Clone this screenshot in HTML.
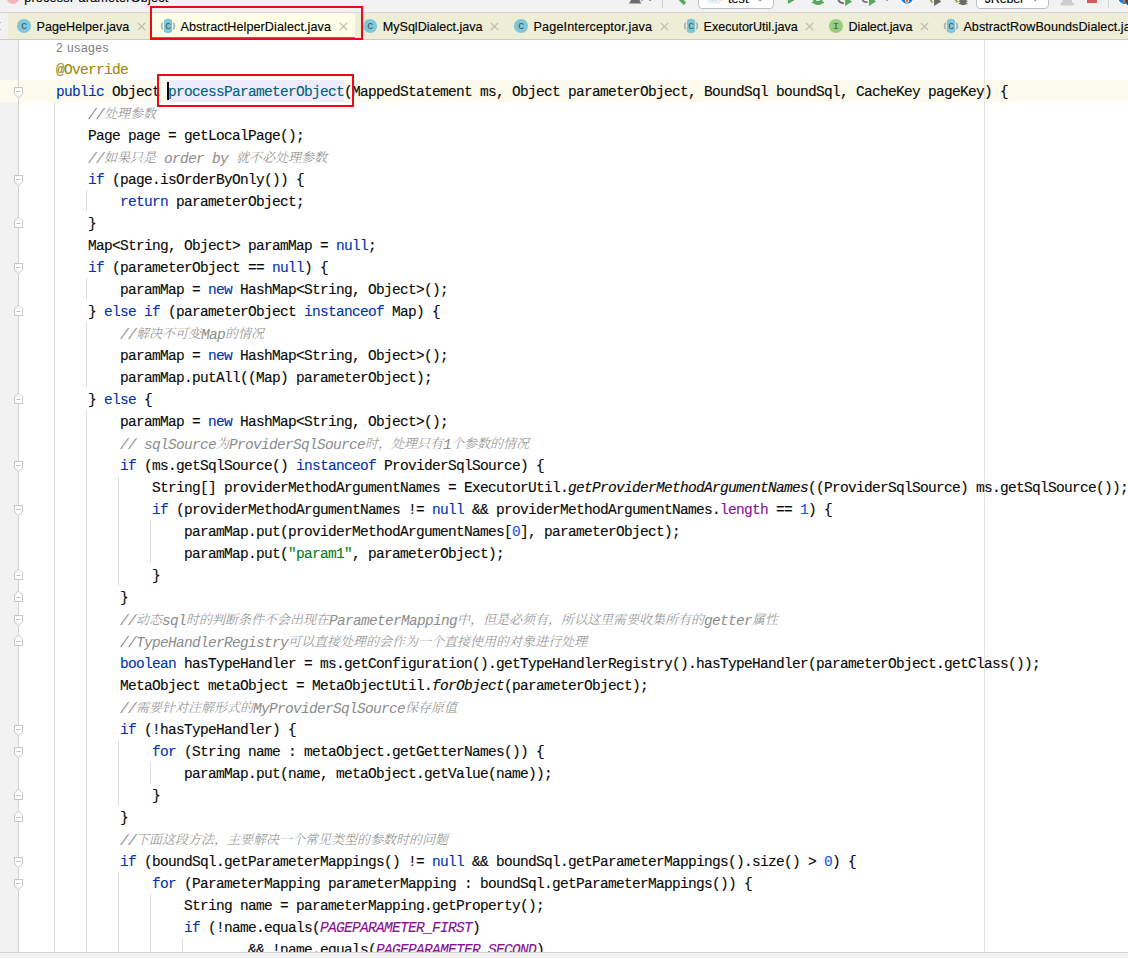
<!DOCTYPE html>
<html lang="zh">
<head>
<meta charset="utf-8">
<title>AbstractHelperDialect.java</title>
<style>
html,body{margin:0;padding:0}
body{width:1128px;height:958px;overflow:hidden;position:relative;background:#fff;font-family:"Liberation Sans","Noto Sans CJK SC",sans-serif}
#top{position:absolute;left:0;top:0;width:1128px;height:12px;background:#f2f2f2;border-bottom:1px solid #d4d4d4;overflow:hidden}
#tabs{position:absolute;left:0;top:13px;width:1128px;height:26px;background:#f2f2f2;border-bottom:1px solid #cbcbcb;overflow:hidden}
#tabs .bg{position:absolute;left:8px;top:0;width:1120px;height:26px;background:#eeedd5}
#tabs .act{position:absolute;left:152px;top:0;width:203px;height:27px;background:#fffee6}
#tabs .act i{position:absolute;left:0;top:24px;width:100%;height:3px;background:#3f84cc}
#tw{position:absolute;left:0;top:0;width:1128px;height:40px;overflow:hidden}
.ic{position:absolute;display:block}
.tl{position:absolute;top:19px;height:16px;line-height:16px;font-size:12.6px;color:#000;-webkit-text-stroke:0.12px #000;white-space:nowrap;font-family:"Liberation Sans",sans-serif;transform-origin:0 50%}
#ed{position:absolute;left:0;top:40px;width:1128px;height:912px;overflow:hidden;background:#fff}
#gut{position:absolute;left:0;top:0;width:18px;height:913px;background:#f2f2f2;border-right:1px solid #d3d3d3}
#code{position:absolute;left:0;top:-40px;width:1128px;height:991px}
#crow{position:absolute;left:0;top:80px;width:1128px;height:22px;background:#fcfaed}
#gline{position:absolute;left:18px;top:0;width:1px;height:991px;background:#d3d3d3}
#rm{position:absolute;left:984px;top:0;width:1px;height:991px;background:#e2e2e2}
#hl{position:absolute;left:168px;top:80px;width:176px;height:22px;background:#edebfc}
#caret{position:absolute;left:167px;top:82px;width:2px;height:18px;background:#000}
.ln{position:absolute;height:22px;line-height:22px;white-space:pre;font-family:"Liberation Mono","Noto Serif CJK SC",monospace;font-size:14.5px;letter-spacing:-0.7014px;color:#080808;margin-top:1px;-webkit-text-stroke-width:0.12px}
.hint{position:absolute;height:22px;line-height:22px;white-space:pre;font-family:"Liberation Sans",sans-serif;font-size:12px;letter-spacing:0.55px;color:#7c7c88;margin-top:1px}
.k{color:#0033b3}.n{color:#1750eb}.s{color:#067d17}.a{color:#9e880d}.f{color:#871094}.i{font-style:italic}.m{color:#00627a}
.c{color:#8c8c8c;font-style:italic;-webkit-text-stroke-width:0}
.z{font-family:"Noto Serif CJK SC",serif;font-size:13px;font-weight:300;letter-spacing:0;position:relative;top:-1px;-webkit-text-stroke-width:0}
.g{position:absolute;width:1px;background:#dedede;display:block}
.fm{position:absolute;display:block}
.red{position:absolute;border:2px solid #ec0a14;box-sizing:border-box}
#bot{position:absolute;left:0;top:952px;width:1128px;height:6px;background:#f2f2f2;border-top:1px solid #d0d0d0;box-sizing:border-box}
</style>
</head>
<body>
<div id="top">
<svg width="1128" height="12" viewBox="0 0 1128 12" style="position:absolute;left:0;top:0;display:block" font-family="Liberation Sans, sans-serif">
<circle cx="13" cy="-2.5" r="6.5" fill="#f5b4c2"/>
<text x="24.2" y="2.3" font-size="12.6" fill="#000" stroke="#000" stroke-width="0.12" textLength="144" lengthAdjust="spacing">processParameterObject</text>
<path d="M631 0H639.5L641.2 3.4H629Z" fill="#6e6e6e"/><rect x="641.3" y="0" width="1.2" height="0.8" fill="#6e6e6e"/>
<rect x="649.3" y="0" width="1.6" height="1" fill="#7a7a7a"/>
<rect x="662" y="0" width="1" height="7.5" fill="#cdcdcd"/>
<path d="M678.7 0H683.7L686.2 2.7L683.6 5Z" fill="#55a85f"/>
<rect x="698.5" y="-4.5" width="75" height="13" rx="3.5" ry="3.5" fill="#fff" stroke="#c0c0c0"/>
<rect x="708.5" y="-4.5" width="11" height="7.5" fill="#fff" stroke="#e3e7ea"/><rect x="710" y="-4" width="8" height="5.8" fill="#d4e9f7"/>
<rect x="721" y="0" width="1" height="1" fill="#b0b0b0"/>
<text x="727.9" y="3" font-size="12.6" fill="#000" stroke="#000" stroke-width="0.12" textLength="20.5" lengthAdjust="spacing">test</text>
<rect x="759.2" y="0" width="1.8" height="1" fill="#7a7a7a"/>
<path d="M787.9 0H794.5L787.9 3.9Z" fill="#55a85f"/>
<path d="M813.3 0H822.6V1.2Q822.6 5 818 5Q813.3 5 813.3 1.2Z" fill="#55a85f"/><rect x="811.9" y="1.9" width="12.2" height="1.3" fill="#55a85f"/><rect x="816.3" y="0" width="3.6" height="1" fill="#e8f3e9"/>
<path d="M838.3 0Q839.5 3 843.8 3.4" stroke="#6a6a6a" stroke-width="2" fill="none"/>
<path d="M845.1 0H849.9L852 1.4L845.1 6Z" fill="#55a85f"/>
<path d="M862.3 0Q863.5 2.4 867.6 2.2" stroke="#6a6a6a" stroke-width="1.5" fill="none"/>
<path d="M869 0H874L875.9 1.6L869 5.9Z" fill="#55a85f"/>
<rect x="886.2" y="0" width="1.6" height="0.8" fill="#7a7a7a"/>
<circle cx="907" cy="-2.2" r="7.1" fill="#fff"/><circle cx="907" cy="-2.2" r="6" fill="#217be0"/><rect x="905.3" y="-4" width="3.6" height="6.7" rx="1.6" fill="#fff"/><rect x="906" y="-4" width="2.1" height="6" rx="1" fill="#f26a25"/>
<path d="M929.6 0H931.6L933.2 2.2L931.8 3Z" fill="#7aa82f"/><path d="M934 0H939.4L941.2 1.6L934 5.9Z" fill="#6b6b6b"/>
<path d="M954.6 0H956.6L958.2 2.2L956.8 3Z" fill="#7aa82f"/><path d="M959.6 0H966.6V1.4Q966.6 5.1 963.1 5.1Q959.6 5.1 959.6 1.4Z" fill="#6b6b6b"/><path d="M958.6 1.3H967.6M958.8 3.6H967.4" stroke="#6b6b6b" stroke-width="1.1"/>
<rect x="976.5" y="-4.5" width="72" height="13" rx="3.5" ry="3.5" fill="#fff" stroke="#c0c0c0"/>
<text x="984.8" y="3" font-size="12.6" fill="#000" stroke="#000" stroke-width="0.12" textLength="38" lengthAdjust="spacing">JRebel</text>
<rect x="1034.4" y="0" width="1.8" height="1" fill="#7a7a7a"/>
<path d="M1062.5 0H1071.8V2Q1074 2.3 1074 4Q1074 5.6 1072.5 5.6H1062Q1060.6 5.6 1060.6 4Q1060.6 2.3 1062.5 2Z" fill="#cdcdcd"/>
<rect x="1087" y="-4" width="10" height="7" fill="#db5860"/>
<rect x="1108" y="0" width="1" height="7.5" fill="#cdcdcd"/>
<circle cx="1124.5" cy="-2" r="7.2" fill="#fff"/><circle cx="1124.5" cy="-2" r="6" fill="#217be0"/><rect x="1123.2" y="-3" width="2.2" height="5.4" rx="1" fill="#f26a25"/><circle cx="1131.5" cy="0" r="6.5" fill="#3d4c56"/>
</svg>
</div>
<div id="tabs"><div class="bg"></div><i style="position:absolute;left:0;top:9px;width:1px;height:1px;background:#b4b4b4"></i><i style="position:absolute;left:0;top:16px;width:1px;height:1px;background:#b4b4b4"></i><div class="act"><i></i></div></div>
<div id="ed">
<div id="gut"></div>
<div id="code">
<div id="crow"></div>
<div id="gline"></div>
<div id="rm"></div>
<div id="hl"></div>
<i class="g" style="left:54px;top:102px;height:850px"></i>
<i class="g" style="left:86px;top:190px;height:22px"></i>
<i class="g" style="left:86px;top:278px;height:22px"></i>
<i class="g" style="left:86px;top:322px;height:66px"></i>
<i class="g" style="left:86px;top:410px;height:542px"></i>
<i class="g" style="left:118px;top:476px;height:110px"></i>
<i class="g" style="left:118px;top:740px;height:66px"></i>
<i class="g" style="left:118px;top:872px;height:80px"></i>
<i class="g" style="left:150px;top:520px;height:44px"></i>
<i class="g" style="left:150px;top:762px;height:22px"></i>
<i class="g" style="left:150px;top:894px;height:58px"></i>
<i class="g" style="left:182px;top:938px;height:14px"></i>
<div class="hint" style="top:36px;left:56px">2 usages</div>
<div class="ln" style="top:58px;left:56px"><span class="a">@Override</span></div>
<div class="ln" style="top:80px;left:56px"><span class="k">public</span> Object <span class="m">processParameterObject</span>(MappedStatement ms, Object parameterObject, BoundSql boundSql, CacheKey pageKey) {</div>
<div class="ln" style="top:102px;left:88px"><span class="c">//<span class="z">处理参数</span></span></div>
<div class="ln" style="top:124px;left:88px">Page page = getLocalPage();</div>
<div class="ln" style="top:146px;left:88px"><span class="c">//<span class="z">如果只是</span> order by <span class="z">就不必处理参数</span></span></div>
<div class="ln" style="top:168px;left:88px"><span class="k">if</span> (page.isOrderByOnly()) {</div>
<div class="ln" style="top:190px;left:120px"><span class="k">return</span> parameterObject;</div>
<div class="ln" style="top:212px;left:88px">}</div>
<div class="ln" style="top:234px;left:88px">Map&lt;String, Object&gt; paramMap = <span class="k">null</span>;</div>
<div class="ln" style="top:256px;left:88px"><span class="k">if</span> (parameterObject == <span class="k">null</span>) {</div>
<div class="ln" style="top:278px;left:120px">paramMap = <span class="k">new</span> HashMap&lt;String, Object&gt;();</div>
<div class="ln" style="top:300px;left:88px">} <span class="k">else</span> <span class="k">if</span> (parameterObject <span class="k">instanceof</span> Map) {</div>
<div class="ln" style="top:322px;left:120px"><span class="c">//<span class="z">解决不可变</span>Map<span class="z">的情况</span></span></div>
<div class="ln" style="top:344px;left:120px">paramMap = <span class="k">new</span> HashMap&lt;String, Object&gt;();</div>
<div class="ln" style="top:366px;left:120px">paramMap.putAll((Map) parameterObject);</div>
<div class="ln" style="top:388px;left:88px">} <span class="k">else</span> {</div>
<div class="ln" style="top:410px;left:120px">paramMap = <span class="k">new</span> HashMap&lt;String, Object&gt;();</div>
<div class="ln" style="top:432px;left:120px"><span class="c">// sqlSource<span class="z">为</span>ProviderSqlSource<span class="z">时，处理只有</span>1<span class="z">个参数的情况</span></span></div>
<div class="ln" style="top:454px;left:120px"><span class="k">if</span> (ms.getSqlSource() <span class="k">instanceof</span> ProviderSqlSource) {</div>
<div class="ln" style="top:476px;left:152px">String[] providerMethodArgumentNames = ExecutorUtil.<span class="i">getProviderMethodArgumentNames</span>((ProviderSqlSource) ms.getSqlSource());</div>
<div class="ln" style="top:498px;left:152px"><span class="k">if</span> (providerMethodArgumentNames != <span class="k">null</span> &amp;&amp; providerMethodArgumentNames.<span class="f">length</span> == <span class="n">1</span>) {</div>
<div class="ln" style="top:520px;left:184px">paramMap.put(providerMethodArgumentNames[<span class="n">0</span>], parameterObject);</div>
<div class="ln" style="top:542px;left:184px">paramMap.put(<span class="s">"param1"</span>, parameterObject);</div>
<div class="ln" style="top:564px;left:152px">}</div>
<div class="ln" style="top:586px;left:120px">}</div>
<div class="ln" style="top:608px;left:120px"><span class="c">//<span class="z">动态</span>sql<span class="z">时的判断条件不会出现在</span>ParameterMapping<span class="z">中，但是必须有，所以这里需要收集所有的</span>getter<span class="z">属性</span></span></div>
<div class="ln" style="top:630px;left:120px"><span class="c">//TypeHandlerRegistry<span class="z">可以直接处理的会作为一个直接使用的对象进行处理</span></span></div>
<div class="ln" style="top:652px;left:120px"><span class="k">boolean</span> hasTypeHandler = ms.getConfiguration().getTypeHandlerRegistry().hasTypeHandler(parameterObject.getClass());</div>
<div class="ln" style="top:674px;left:120px">MetaObject metaObject = MetaObjectUtil.<span class="i">forObject</span>(parameterObject);</div>
<div class="ln" style="top:696px;left:120px"><span class="c">//<span class="z">需要针对注解形式的</span>MyProviderSqlSource<span class="z">保存原值</span></span></div>
<div class="ln" style="top:718px;left:120px"><span class="k">if</span> (!hasTypeHandler) {</div>
<div class="ln" style="top:740px;left:152px"><span class="k">for</span> (String name : metaObject.getGetterNames()) {</div>
<div class="ln" style="top:762px;left:184px">paramMap.put(name, metaObject.getValue(name));</div>
<div class="ln" style="top:784px;left:152px">}</div>
<div class="ln" style="top:806px;left:120px">}</div>
<div class="ln" style="top:828px;left:120px"><span class="c">//<span class="z">下面这段方法，主要解决一个常见类型的参数时的问题</span></span></div>
<div class="ln" style="top:850px;left:120px"><span class="k">if</span> (boundSql.getParameterMappings() != <span class="k">null</span> &amp;&amp; boundSql.getParameterMappings().size() &gt; <span class="n">0</span>) {</div>
<div class="ln" style="top:872px;left:152px"><span class="k">for</span> (ParameterMapping parameterMapping : boundSql.getParameterMappings()) {</div>
<div class="ln" style="top:894px;left:184px">String name = parameterMapping.getProperty();</div>
<div class="ln" style="top:916px;left:184px"><span class="k">if</span> (!name.equals(<span class="f i">PAGEPARAMETER_FIRST</span>)</div>
<div class="ln" style="top:938px;left:248px">&amp;&amp; !name.equals(<span class="f i">PAGEPARAMETER_SECOND</span>)</div>
<div id="caret"></div>
<svg class="fm" style="left:13px;top:86px" width="11" height="13" viewBox="0 0 11 13"><path d="M1.5 1.5H9.5V7.8L5.5 11.9L1.5 7.8Z" fill="#fff" stroke="#c4c4c4"/><path d="M3.5 5.5H7.5" stroke="#bdbdbd"/></svg>
<svg class="fm" style="left:13px;top:174px" width="11" height="13" viewBox="0 0 11 13"><path d="M1.5 1.5H9.5V7.8L5.5 11.9L1.5 7.8Z" fill="#fff" stroke="#c4c4c4"/><path d="M3.5 5.5H7.5" stroke="#bdbdbd"/></svg>
<svg class="fm" style="left:13px;top:215px" width="11" height="14" viewBox="0 0 11 14"><path d="M1.5 12.5H9.5V6.1L5.5 2L1.5 6.1Z" fill="#fff" stroke="#c4c4c4"/><path d="M3.5 8.5H7.5" stroke="#bdbdbd"/></svg>
<svg class="fm" style="left:13px;top:262px" width="11" height="13" viewBox="0 0 11 13"><path d="M1.5 1.5H9.5V7.8L5.5 11.9L1.5 7.8Z" fill="#fff" stroke="#c4c4c4"/><path d="M3.5 5.5H7.5" stroke="#bdbdbd"/></svg>
<svg class="fm" style="left:13px;top:303px" width="11" height="14" viewBox="0 0 11 14"><path d="M1.5 12.5H9.5V6.1L5.5 2L1.5 6.1Z" fill="#fff" stroke="#c4c4c4"/><path d="M3.5 8.5H7.5" stroke="#bdbdbd"/></svg>
<svg class="fm" style="left:13px;top:391px" width="11" height="14" viewBox="0 0 11 14"><path d="M1.5 12.5H9.5V6.1L5.5 2L1.5 6.1Z" fill="#fff" stroke="#c4c4c4"/><path d="M3.5 8.5H7.5" stroke="#bdbdbd"/></svg>
<svg class="fm" style="left:13px;top:460px" width="11" height="13" viewBox="0 0 11 13"><path d="M1.5 1.5H9.5V7.8L5.5 11.9L1.5 7.8Z" fill="#fff" stroke="#c4c4c4"/><path d="M3.5 5.5H7.5" stroke="#bdbdbd"/></svg>
<svg class="fm" style="left:13px;top:504px" width="11" height="13" viewBox="0 0 11 13"><path d="M1.5 1.5H9.5V7.8L5.5 11.9L1.5 7.8Z" fill="#fff" stroke="#c4c4c4"/><path d="M3.5 5.5H7.5" stroke="#bdbdbd"/></svg>
<svg class="fm" style="left:13px;top:567px" width="11" height="14" viewBox="0 0 11 14"><path d="M1.5 12.5H9.5V6.1L5.5 2L1.5 6.1Z" fill="#fff" stroke="#c4c4c4"/><path d="M3.5 8.5H7.5" stroke="#bdbdbd"/></svg>
<svg class="fm" style="left:13px;top:589px" width="11" height="14" viewBox="0 0 11 14"><path d="M1.5 12.5H9.5V6.1L5.5 2L1.5 6.1Z" fill="#fff" stroke="#c4c4c4"/><path d="M3.5 8.5H7.5" stroke="#bdbdbd"/></svg>
<svg class="fm" style="left:13px;top:614px" width="11" height="13" viewBox="0 0 11 13"><path d="M1.5 1.5H9.5V7.8L5.5 11.9L1.5 7.8Z" fill="#fff" stroke="#c4c4c4"/><path d="M3.5 5.5H7.5" stroke="#bdbdbd"/></svg>
<svg class="fm" style="left:13px;top:633px" width="11" height="14" viewBox="0 0 11 14"><path d="M1.5 12.5H9.5V6.1L5.5 2L1.5 6.1Z" fill="#fff" stroke="#c4c4c4"/><path d="M3.5 8.5H7.5" stroke="#bdbdbd"/></svg>
<svg class="fm" style="left:13px;top:724px" width="11" height="13" viewBox="0 0 11 13"><path d="M1.5 1.5H9.5V7.8L5.5 11.9L1.5 7.8Z" fill="#fff" stroke="#c4c4c4"/><path d="M3.5 5.5H7.5" stroke="#bdbdbd"/></svg>
<svg class="fm" style="left:13px;top:746px" width="11" height="13" viewBox="0 0 11 13"><path d="M1.5 1.5H9.5V7.8L5.5 11.9L1.5 7.8Z" fill="#fff" stroke="#c4c4c4"/><path d="M3.5 5.5H7.5" stroke="#bdbdbd"/></svg>
<svg class="fm" style="left:13px;top:787px" width="11" height="14" viewBox="0 0 11 14"><path d="M1.5 12.5H9.5V6.1L5.5 2L1.5 6.1Z" fill="#fff" stroke="#c4c4c4"/><path d="M3.5 8.5H7.5" stroke="#bdbdbd"/></svg>
<svg class="fm" style="left:13px;top:809px" width="11" height="14" viewBox="0 0 11 14"><path d="M1.5 12.5H9.5V6.1L5.5 2L1.5 6.1Z" fill="#fff" stroke="#c4c4c4"/><path d="M3.5 8.5H7.5" stroke="#bdbdbd"/></svg>
<svg class="fm" style="left:13px;top:856px" width="11" height="13" viewBox="0 0 11 13"><path d="M1.5 1.5H9.5V7.8L5.5 11.9L1.5 7.8Z" fill="#fff" stroke="#c4c4c4"/><path d="M3.5 5.5H7.5" stroke="#bdbdbd"/></svg>
<svg class="fm" style="left:13px;top:878px" width="11" height="13" viewBox="0 0 11 13"><path d="M1.5 1.5H9.5V7.8L5.5 11.9L1.5 7.8Z" fill="#fff" stroke="#c4c4c4"/><path d="M3.5 5.5H7.5" stroke="#bdbdbd"/></svg>
</div>
</div>
<div id="tw">
<svg class="ic" style="left:16px;top:18px" width="16" height="16" viewBox="0 0 16 16"><circle cx="8" cy="8" r="7.1" fill="#80c8d8"/><text x="8" y="11" text-anchor="middle" font-family="Liberation Sans, sans-serif" font-size="11.5" fill="#3c565f">c</text></svg>
<span class="tl" style="left:36.6px;letter-spacing:0.025px">PageHelper.java</span>
<svg class="ic" style="left:137px;top:22px" width="9" height="9" viewBox="0 0 9 9"><path d="M0.8 0.8L8.2 8.2M8.2 0.8L0.8 8.2" stroke="#b9b9ad" stroke-width="1.15" fill="none"/></svg>
<svg class="ic" style="left:160px;top:18px" width="16" height="16" viewBox="0 0 16 16"><path d="M2.7 4.6A6.3 6.3 0 0 0 2.7 11.4" fill="none" stroke="#a7b2b8" stroke-width="1.7"/><path d="M13.3 4.6A6.3 6.3 0 0 1 13.3 11.4" fill="none" stroke="#a7b2b8" stroke-width="1.7"/><path d="M3.9 2.2A7.1 7.1 0 0 1 12.1 2.2V13.8A7.1 7.1 0 0 1 3.9 13.8Z" fill="#80c8d8"/><text x="8" y="11" text-anchor="middle" font-family="Liberation Sans, sans-serif" font-size="11.5" fill="#3c565f">c</text></svg>
<span class="tl" style="left:180.4px;letter-spacing:0.085px">AbstractHelperDialect.java</span>
<svg class="ic" style="left:339px;top:22px" width="9" height="9" viewBox="0 0 9 9"><path d="M0.8 0.8L8.2 8.2M8.2 0.8L0.8 8.2" stroke="#b9b9ad" stroke-width="1.15" fill="none"/></svg>
<svg class="ic" style="left:362px;top:18px" width="16" height="16" viewBox="0 0 16 16"><circle cx="8" cy="8" r="7.1" fill="#80c8d8"/><text x="8" y="11" text-anchor="middle" font-family="Liberation Sans, sans-serif" font-size="11.5" fill="#3c565f">c</text></svg>
<span class="tl" style="left:382.8px;letter-spacing:-0.029px">MySqlDialect.java</span>
<svg class="ic" style="left:490px;top:22px" width="9" height="9" viewBox="0 0 9 9"><path d="M0.8 0.8L8.2 8.2M8.2 0.8L0.8 8.2" stroke="#b9b9ad" stroke-width="1.15" fill="none"/></svg>
<svg class="ic" style="left:513px;top:18px" width="16" height="16" viewBox="0 0 16 16"><circle cx="8" cy="8" r="7.1" fill="#80c8d8"/><text x="8" y="11" text-anchor="middle" font-family="Liberation Sans, sans-serif" font-size="11.5" fill="#3c565f">c</text></svg>
<span class="tl" style="left:533.5px;letter-spacing:0.158px">PageInterceptor.java</span>
<svg class="ic" style="left:660px;top:22px" width="9" height="9" viewBox="0 0 9 9"><path d="M0.8 0.8L8.2 8.2M8.2 0.8L0.8 8.2" stroke="#b9b9ad" stroke-width="1.15" fill="none"/></svg>
<svg class="ic" style="left:683px;top:18px" width="16" height="16" viewBox="0 0 16 16"><path d="M2.7 4.6A6.3 6.3 0 0 0 2.7 11.4" fill="none" stroke="#a7b2b8" stroke-width="1.7"/><path d="M13.3 4.6A6.3 6.3 0 0 1 13.3 11.4" fill="none" stroke="#a7b2b8" stroke-width="1.7"/><path d="M3.9 2.2A7.1 7.1 0 0 1 12.1 2.2V13.8A7.1 7.1 0 0 1 3.9 13.8Z" fill="#80c8d8"/><text x="8" y="11" text-anchor="middle" font-family="Liberation Sans, sans-serif" font-size="11.5" fill="#3c565f">c</text></svg>
<span class="tl" style="left:703.5px;letter-spacing:-0.020px">ExecutorUtil.java</span>
<svg class="ic" style="left:805px;top:22px" width="9" height="9" viewBox="0 0 9 9"><path d="M0.8 0.8L8.2 8.2M8.2 0.8L0.8 8.2" stroke="#b9b9ad" stroke-width="1.15" fill="none"/></svg>
<svg class="ic" style="left:828px;top:18px" width="16" height="16" viewBox="0 0 16 16"><circle cx="8" cy="8" r="7.1" fill="#98ce80"/><text x="8" y="11" text-anchor="middle" font-family="Liberation Mono, monospace" font-size="9.2" font-weight="bold" fill="#56764a">I</text></svg>
<span class="tl" style="left:848.6px;letter-spacing:-0.117px">Dialect.java</span>
<svg class="ic" style="left:920px;top:22px" width="9" height="9" viewBox="0 0 9 9"><path d="M0.8 0.8L8.2 8.2M8.2 0.8L0.8 8.2" stroke="#b9b9ad" stroke-width="1.15" fill="none"/></svg>
<svg class="ic" style="left:943px;top:18px" width="16" height="16" viewBox="0 0 16 16"><path d="M2.7 4.6A6.3 6.3 0 0 0 2.7 11.4" fill="none" stroke="#a7b2b8" stroke-width="1.7"/><path d="M13.3 4.6A6.3 6.3 0 0 1 13.3 11.4" fill="none" stroke="#a7b2b8" stroke-width="1.7"/><path d="M3.9 2.2A7.1 7.1 0 0 1 12.1 2.2V13.8A7.1 7.1 0 0 1 3.9 13.8Z" fill="#80c8d8"/><text x="8" y="11" text-anchor="middle" font-family="Liberation Sans, sans-serif" font-size="11.5" fill="#3c565f">c</text></svg>
<span class="tl" style="left:963.4px;letter-spacing:0.055px">AbstractRowBoundsDialect.java</span>
</div>
<div id="bot"></div>
<div class="red" style="left:150px;top:6px;width:213px;height:34px"></div>
<div class="red" style="left:157px;top:74px;width:197px;height:33px"></div>
</body>
</html>
